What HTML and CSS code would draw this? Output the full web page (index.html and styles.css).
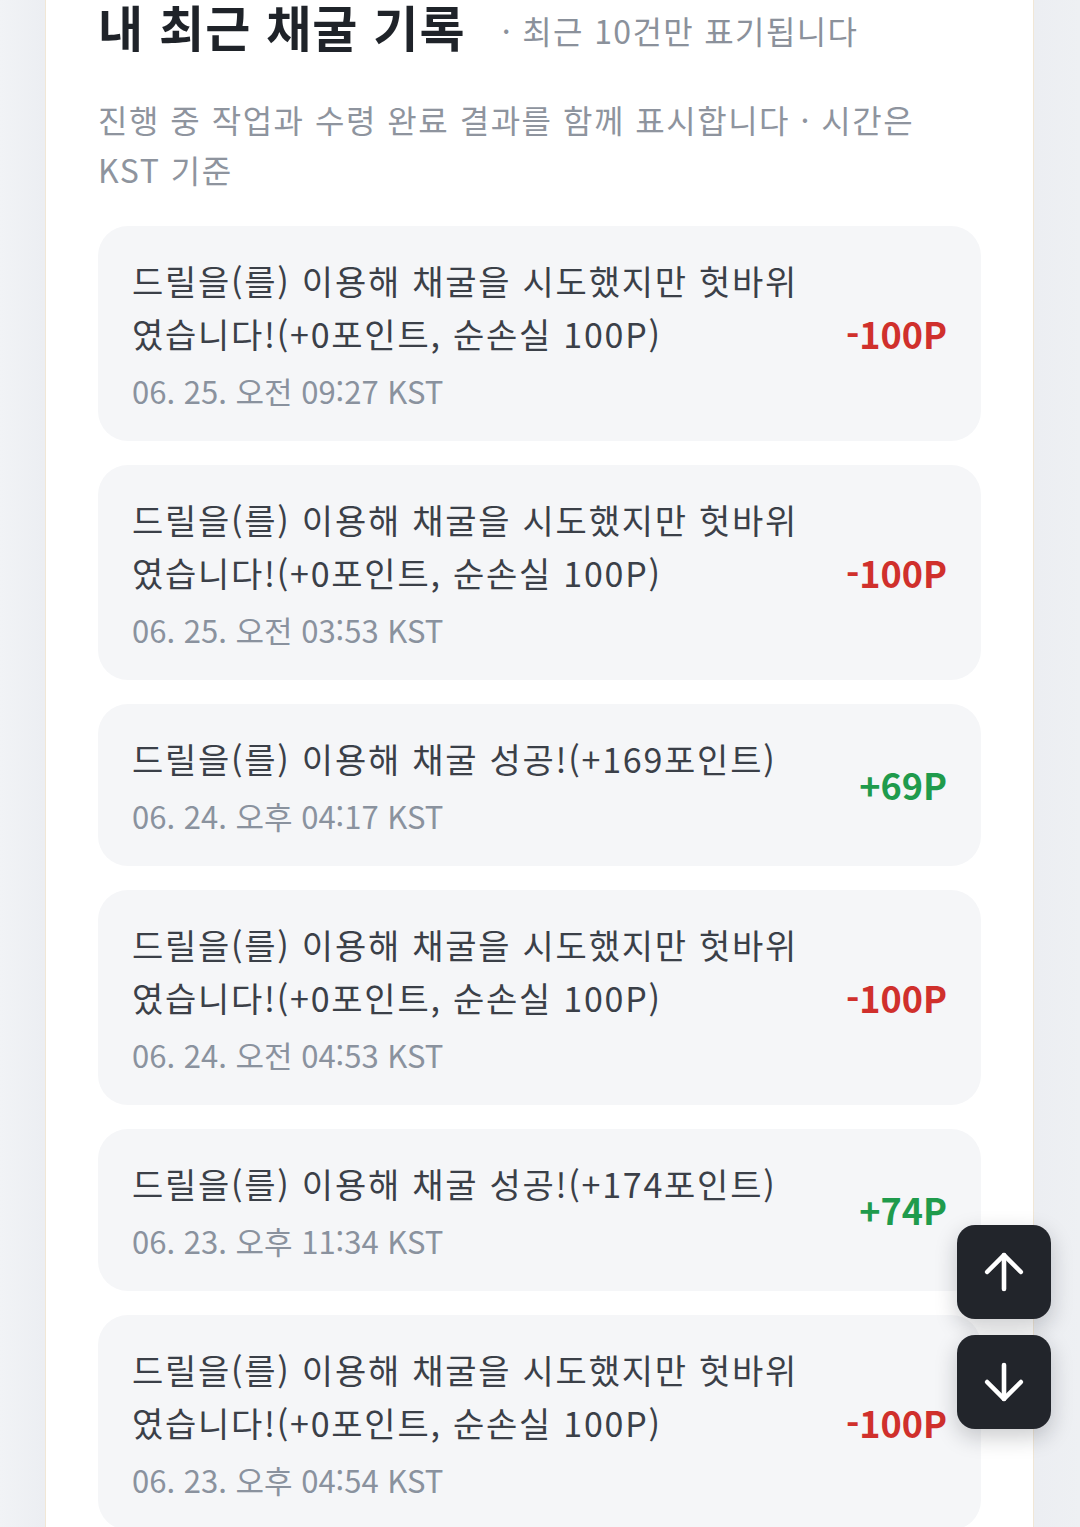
FILE: index.html
```html
<!DOCTYPE html>
<html lang="ko">
<head>
<meta charset="utf-8">
<title>내 최근 채굴 기록</title>
<link rel="stylesheet" href="styles.css">
</head>
<body>
<main class="card">
  <header class="head">
    <h1 class="title">내 최근 채굴 기록</h1>
    <span class="sub">· 최근 10건만 표기됩니다</span>
  </header>
  <p class="desc">진행 중 작업과 수령 완료 결과를 함께 표시합니다 · 시간은 KST 기준</p>
  <ul class="list">
    <li class="item">
      <div class="body">
        <p class="msg">드릴을(를) 이용해 채굴을 시도했지만 헛바위였습니다!(+0포인트, 순손실 100P)</p>
        <p class="date">06. 25. 오전 09:27 KST</p>
      </div>
      <span class="amt neg">-100P</span>
    </li>
    <li class="item">
      <div class="body">
        <p class="msg">드릴을(를) 이용해 채굴을 시도했지만 헛바위였습니다!(+0포인트, 순손실 100P)</p>
        <p class="date">06. 25. 오전 03:53 KST</p>
      </div>
      <span class="amt neg">-100P</span>
    </li>
    <li class="item">
      <div class="body">
        <p class="msg">드릴을(를) 이용해 채굴 성공!(+169포인트)</p>
        <p class="date">06. 24. 오후 04:17 KST</p>
      </div>
      <span class="amt pos">+69P</span>
    </li>
    <li class="item">
      <div class="body">
        <p class="msg">드릴을(를) 이용해 채굴을 시도했지만 헛바위였습니다!(+0포인트, 순손실 100P)</p>
        <p class="date">06. 24. 오전 04:53 KST</p>
      </div>
      <span class="amt neg">-100P</span>
    </li>
    <li class="item">
      <div class="body">
        <p class="msg">드릴을(를) 이용해 채굴 성공!(+174포인트)</p>
        <p class="date">06. 23. 오후 11:34 KST</p>
      </div>
      <span class="amt pos">+74P</span>
    </li>
    <li class="item">
      <div class="body">
        <p class="msg">드릴을(를) 이용해 채굴을 시도했지만 헛바위였습니다!(+0포인트, 순손실 100P)</p>
        <p class="date">06. 23. 오후 04:54 KST</p>
      </div>
      <span class="amt neg">-100P</span>
    </li>
    <li class="item">
      <div class="body">
        <p class="msg">드릴을(를) 이용해 채굴 성공!(+152포인트)</p>
        <p class="date">06. 23. 오전 08:12 KST</p>
      </div>
      <span class="amt pos">+52P</span>
    </li>
  </ul>
</main>
<nav class="fabs">
  <button class="fab" type="button" aria-label="맨 위로">
    <svg viewBox="0 0 24 24" width="58" height="58" fill="none" stroke="#fff" stroke-width="1.9" stroke-linecap="round" stroke-linejoin="round"><path d="M12 19V5"/><path d="M5 12l7-7 7 7"/></svg>
  </button>
  <button class="fab" type="button" aria-label="맨 아래로">
    <svg viewBox="0 0 24 24" width="58" height="58" fill="none" stroke="#fff" stroke-width="1.9" stroke-linecap="round" stroke-linejoin="round"><path d="M12 5v14"/><path d="M19 12l-7 7-7-7"/></svg>
  </button>
</nav>
</body>
</html>
```
FILE: styles.css
```css
* { box-sizing: border-box; }
html, body { margin: 0; padding: 0; }
body {
  background: linear-gradient(90deg, #f1f3f6 0%, #eceef2 4%, #eceef2 96%, #eef0f3 100%);
  font-family: "Noto Sans CJK KR", "Noto Sans", sans-serif;
  color: #3d434b;
}
.card {
  margin: 0 46px 0 45px;
  background: #fff;
  border-left: 1px solid #f1e7d6;
  border-right: 1px solid #f1e7d6;
  padding: 2px 52px 60px;
  min-height: 1700px;
}
.head {
  display: flex;
  align-items: flex-start;
  gap: 36px;
}
.title {
  margin: 0;
  font-size: 49px;
  line-height: 48px;
  font-weight: 700;
  letter-spacing: 1.1px;
  color: #1f2329;
}
.sub {
  padding-top: 8px;
  font-size: 32px;
  line-height: 40px;
  letter-spacing: 1.35px;
  color: #8b919b;
}
.desc {
  margin: 44px 0 0;
  max-width: 870px;
  font-size: 32px;
  line-height: 50px;
  letter-spacing: 1.5px;
  color: #8e949e;
}
.list {
  list-style: none;
  margin: 32px 0 0;
  padding: 0;
  display: flex;
  flex-direction: column;
  gap: 24px;
}
.item {
  display: flex;
  align-items: center;
  gap: 24px;
  background: #f5f6f8;
  border-radius: 30px;
  padding: 28px 34px 30px 34px;
}
.body { flex: 1; min-width: 0; }
.msg {
  margin: 0;
  font-size: 34px;
  line-height: 53px;
  letter-spacing: 1.75px;
  color: #3b4048;
}
.date {
  margin: 11px 0 0;
  font-size: 31px;
  line-height: 40px;
  color: #8a929e;
}
.amt {
  flex: none;
  font-size: 36px;
  font-weight: 700;
  line-height: 1;
}
.neg { color: #d0302c; }
.pos { color: #1f9b4c; }
.fabs {
  position: fixed;
  right: 29px;
  bottom: 98px;
  display: flex;
  flex-direction: column;
  gap: 16px;
}
.fab {
  width: 94px;
  height: 94px;
  border: 0;
  padding: 0;
  border-radius: 18px;
  background: #22252b;
  display: flex;
  align-items: center;
  justify-content: center;
  box-shadow: 0 8px 22px rgba(20, 24, 30, 0.22);
}
.fab svg { display: block; }
```
